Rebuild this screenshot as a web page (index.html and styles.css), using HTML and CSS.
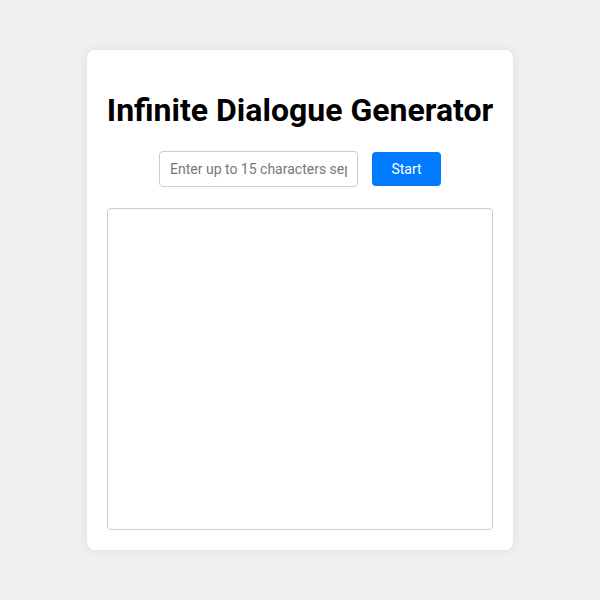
FILE: index.html
```html
<!DOCTYPE html>
<html>
<head>
<meta charset="utf-8">
<link rel="stylesheet" href="styles.css">
</head>
<body>
<div class="card">
  <h1 class="title">Infinite Dialogue Generator</h1>
  <div class="controls">
    <input class="chars" type="text" placeholder="Enter up to 15 characters separated by commas">
    <button class="start">Start</button>
  </div>
  <div class="output"></div>
</div>
</body>
</html>
```
FILE: styles.css
```css
html, body {
  margin: 0;
  padding: 0;
}
body {
  background: #f0f0f0;
  font-family: Roboto, "Liberation Sans", sans-serif;
  width: 600px;
  height: 600px;
  display: flex;
  align-items: center;
  justify-content: center;
}
.card {
  box-sizing: border-box;
  width: 426px;
  height: 500px;
  background: #fff;
  border-radius: 8px;
  box-shadow: 0 0 10px rgba(0,0,0,0.08);
  padding: 20px;
  display: flex;
  flex-direction: column;
}
.title {
  font-size: 32px;
  font-weight: 700;
  text-align: center;
  white-space: nowrap;
  margin: 22px -10px 22px -10px;
  color: #000;
  line-height: 37px;
}
.controls {
  display: flex;
  justify-content: center;
  align-items: center;
  gap: 14px;
  margin-bottom: 21px;
}
.chars {
  box-sizing: border-box;
  width: 199px;
  height: 36px;
  border: 1px solid #ccc;
  border-radius: 4px;
  padding: 0 10px;
  font-family: Roboto, "Liberation Sans", sans-serif;
  font-size: 14px;
  color: #333;
}
.chars::placeholder {
  color: #777;
}
.start {
  box-sizing: border-box;
  width: 69px;
  height: 34px;
  border: none;
  border-radius: 4px;
  background: #007bff;
  color: #fff;
  font-family: Roboto, "Liberation Sans", sans-serif;
  font-size: 14px;
}
.output {
  flex: 1;
  border: 1px solid #ccc;
  border-radius: 4px;
}
```
